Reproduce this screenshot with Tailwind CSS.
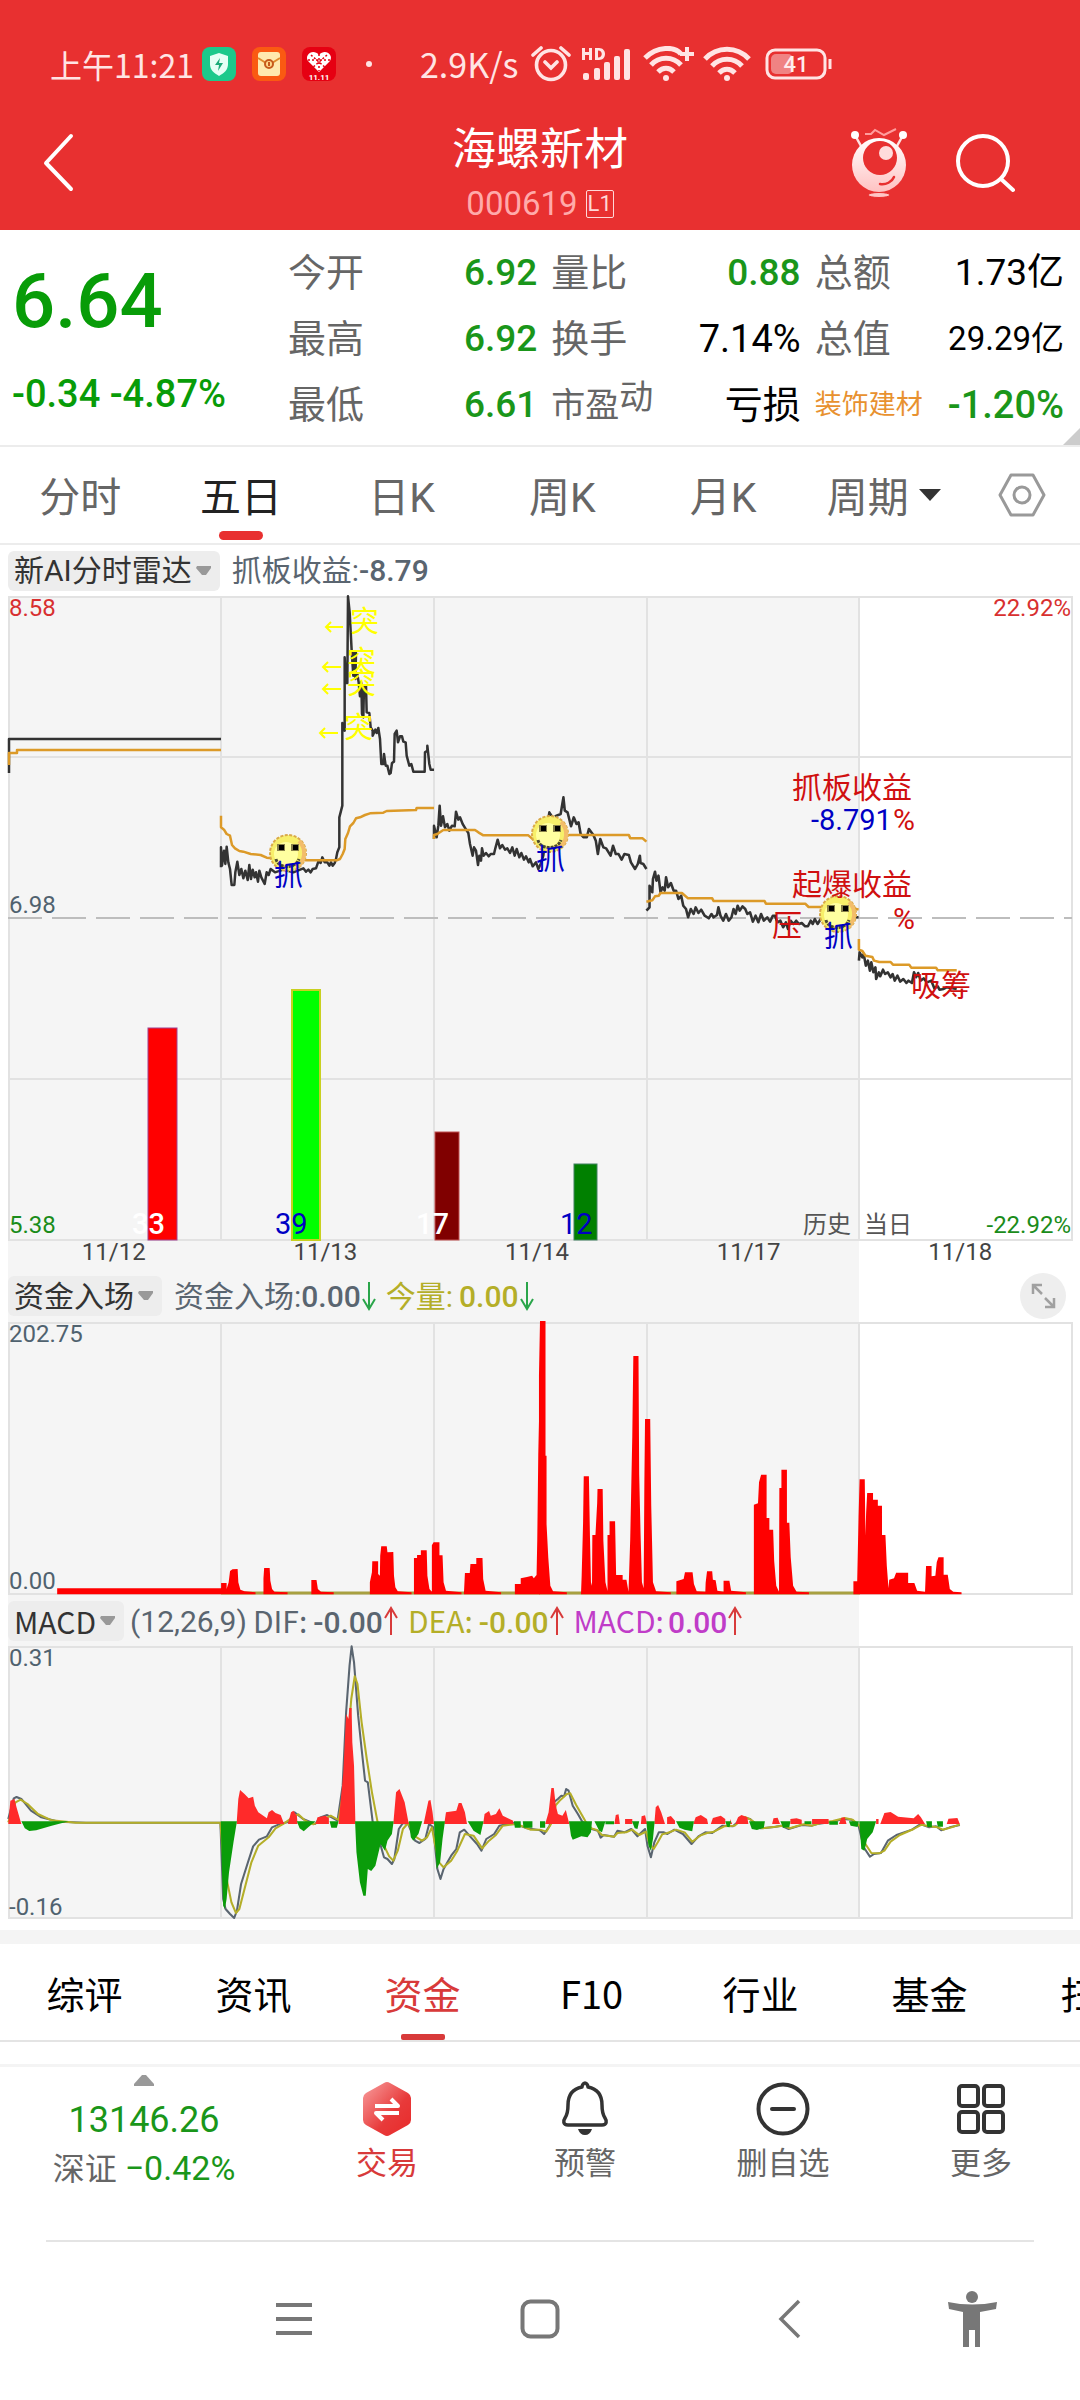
<!DOCTYPE html>
<html lang="zh-CN">
<head>
<meta charset="utf-8">
<meta name="viewport" content="width=device-width, initial-scale=1">
<title>海螺新材 000619</title>
<script src="https://cdn.jsdelivr.net/npm/@tailwindcss/browser@4"></script>
</head>
<body class="bg-white font-['Roboto','Noto_Sans_CJK_SC',sans-serif] text-[#333] overflow-x-hidden">

<header class="bg-[#e83030] text-white">
  <!-- status bar -->
  <div class="flex items-center h-32 pl-[50px] text-[#ffe4e4]">
    <span class="w-[152px] text-[32px] leading-9 font-['Noto_Sans_CJK_SC',sans-serif] whitespace-nowrap">上午11:21</span>
    <div class="flex gap-4">
      <svg class="size-[34px]" viewBox="0 0 34 34"><rect width="34" height="34" rx="8" fill="#1cc98b"/><path d="M17 6l9 3v8c0 6-4 9-9 12-5-3-9-6-9-12V9z" fill="#e6fff5"/><path d="M18 11l-5 7h4l-1 6 5-8h-4z" fill="#1cab78"/></svg>
      <svg class="size-[34px]" viewBox="0 0 34 34"><rect width="34" height="34" rx="8" fill="#fa5a12"/><rect x="6" y="5" width="22" height="24" rx="3" fill="#ffe9ae"/><path d="M6 11l8 5m14-5l-8 5" stroke="#e08a2c" stroke-width="2"/><circle cx="17" cy="17" r="4" fill="#ffd98a" stroke="#c65a1c" stroke-width="2"/><path d="M17 15v4" stroke="#c65a1c" stroke-width="2"/></svg>
      <svg class="size-[34px]" viewBox="0 0 34 34"><rect width="34" height="34" rx="8" fill="#e60012"/><path d="M17 25L6 14c-4-6 5-13 11-6 6-7 15 0 11 6z" fill="#fff"/><path d="M9 8l16 14M25 8L9 22M17 7v17M6 13h22" stroke="#e60012" stroke-width="1.500" stroke-dasharray="2 2"/><text x="17" y="33" font-size="8" font-weight="700" fill="#fff" text-anchor="middle">11.11</text></svg>
    </div>
    <span class="size-[6px] rounded-full bg-[#ffe4e4] ml-[30px]"></span>
    <span class="ml-12 w-[111px] text-[34px] leading-9 font-['Noto_Sans_CJK_SC',sans-serif]">2.9K/s</span>
    <svg class="w-10 h-10" viewBox="0 0 40 40" fill="none" stroke="#ffe4e4" stroke-width="3.600" stroke-linecap="round"><circle cx="20" cy="21" r="14.500"/><path d="M14 18l6 6 6-6M2 11l8-7M38 11l-8-7"/></svg>
    <svg class="ml-[10px] w-[50px] h-9" viewBox="0 0 50 36" fill="#ffe4e4"><path d="M1 2h3v4h4V2h3v12H8V9H4v5H1zM14 2h4c8 0 8 12 0 12h-4zm3 2.500v7c5 0 5-7 0-7z"/><rect x="2" y="27" width="6" height="7" rx="2"/><rect x="13" y="22" width="6" height="12" rx="2"/><rect x="23" y="16" width="6" height="18" rx="2"/><rect x="33" y="10" width="6" height="24" rx="2"/><rect x="43" y="3" width="6" height="31" rx="2"/></svg>
    <svg class="ml-3 w-[52px] h-9" viewBox="0 0 52 36" fill="none" stroke="#ffe4e4" stroke-width="5"><path d="M2 12c12-12 30-12 36-4M8 19c8-9 22-9 30 0M15 26c5-5 11-5 16 0" stroke-linecap="butt"/><circle cx="23" cy="32" r="3" fill="#ffe4e4" stroke="none"/><path d="M44 1v14M37 8h14" stroke-width="4"/></svg>
    <svg class="ml-2 w-[48px] h-9" viewBox="0 0 48 36" fill="none" stroke="#ffe4e4" stroke-width="5"><path d="M2 13c12-13 32-13 44 0M9 20c8-9 22-9 30 0M16 27c5-5 11-5 16 0"/><circle cx="24" cy="32" r="3" fill="#ffe4e4" stroke="none"/></svg>
    <svg class="ml-[14px] w-[68px] h-8" viewBox="0 0 68 32"><rect x="2" y="2" width="58" height="28" rx="8" fill="none" stroke="#ffe4e4" stroke-width="3"/><rect x="6" y="6" width="22" height="20" rx="5" fill="#f08383"/><path d="M65 11v10" stroke="#ffe4e4" stroke-width="3"/><text x="31" y="24" font-size="22" font-weight="500" fill="#ffecec" text-anchor="middle">41</text></svg>
  </div>
  <!-- title row -->
  <div class="flex items-start justify-between h-[102px]">
    <a href="#back" aria-label="返回" class="w-[240px] pl-10"><svg class="mt-1 w-9 h-[60px]" viewBox="0 0 36 60" fill="none" stroke="#fff" stroke-width="4" stroke-linecap="round" stroke-linejoin="round"><path d="M31 4L6 31l25 26"/></svg></a>
    <div class="flex flex-col items-center -mt-[10px]">
      <h1 class="text-[44px] leading-[56px] font-['Noto_Sans_CJK_SC',sans-serif]">海螺新材</h1>
      <div class="flex items-center gap-2 h-12 text-[33px] text-[#ffaaaa] pt-[11px]">000619<span class="border border-[#ffd8d8] rounded-xs h-7 w-7 text-center text-[22px] leading-[26px] text-[#ffd8d8]">L1</span></div>
    </div>
    <div class="w-[240px] flex items-center gap-[46px] pl-[9px]">
      <button aria-label="智能助手"><svg class="w-[60px] h-[70px]" viewBox="0 0 60 70"><defs><linearGradient id="rb" x1="0" y1="0" x2="0" y2="1"><stop offset="0" stop-color="#fff"/><stop offset="1" stop-color="#ffc2c2"/></linearGradient></defs><path d="M7 9l5 9M53 9l-5 9" stroke="#ffe2e2" stroke-width="2.500"/><circle cx="6" cy="7" r="4" fill="#fff"/><circle cx="54" cy="7" r="4" fill="#fff"/><path d="M16 6h6l4-4 9 5 12-6" fill="none" stroke="#ff9d9d" stroke-width="2"/><circle cx="30" cy="37" r="27" fill="url(#rb)"/><circle cx="31" cy="30" r="17" fill="#e83030"/><circle cx="37" cy="25" r="7" fill="#ffdcdc"/><path d="M31 56c6 1 12-2 14-7" fill="none" stroke="#e83030" stroke-width="2.500" stroke-linecap="round"/><ellipse cx="30" cy="67" rx="11" ry="2.500" fill="#ffc6c6" stroke="#e83030"/></svg></button>
      <button aria-label="搜索"><svg class="size-[60px]" viewBox="0 0 60 60" fill="none" stroke="#fff" stroke-width="4" stroke-linecap="round"><circle cx="28" cy="28" r="25"/><path d="M46 46l12 11"/></svg></button>
    </div>
  </div>
</header>

<!-- quote summary -->
<section class="relative flex pt-[10px] pb-[7px] border-b-2 border-[#ececec] overflow-hidden">
  <div class="w-[288px] shrink-0 pl-3 text-[#089c08] font-medium">
    <div class="text-[76px] leading-[122px]">6.64</div>
    <div class="text-[38px] leading-[64px] whitespace-nowrap">-0.34 -4.87%</div>
  </div>
  <dl class="flex-1 grid grid-cols-3 gap-x-[14px] pr-4 text-[38px] leading-[66px] text-black [&_dt]:text-[#666] [&_div]:flex [&_div]:justify-between [&_div]:whitespace-nowrap">
    <div><dt>今开</dt><dd class="text-[#1a961a] font-medium text-[37px]">6.92</dd></div>
    <div><dt>量比</dt><dd class="text-[#1a961a] font-medium text-[37px]">0.88</dd></div>
    <div><dt>总额</dt><dd class="text-[37px]">1.73亿</dd></div>
    <div><dt>最高</dt><dd class="text-[#1a961a] font-medium text-[37px]">6.92</dd></div>
    <div><dt>换手</dt><dd class="text-[38px]">7.14%</dd></div>
    <div><dt>总值</dt><dd class="text-[33px]">29.29亿</dd></div>
    <div><dt>最低</dt><dd class="text-[#1a961a] font-medium text-[37px]">6.61</dd></div>
    <div><dt class="text-[34px]">市盈<span class="inline-block align-top -mt-2">动</span></dt><dd>亏损</dd></div>
    <div><dt class="text-[27px]"><a href="#sector" class="text-[#e8912f]">装饰建材</a></dt><dd class="text-[#1a961a] font-medium text-[38px]">-1.20%</dd></div>
  </dl>
  <svg class="absolute right-0 bottom-0 size-[17px]" viewBox="0 0 17 17"><path d="M17 0v17H0z" fill="#ccc"/></svg>
</section>

<!-- period tabs -->
<nav class="flex items-center h-[98px] border-b-2 border-[#ececec] text-[41px] text-[#666] [&>button]:pt-2">
  <button class="flex-1 h-full">分时</button>
  <button class="flex-1 h-full relative text-[#222]">五日<span class="absolute left-1/2 -ml-[22px] bottom-[3px] w-11 h-[9px] rounded-full bg-[#e83030]"></span></button>
  <button class="flex-1 h-full">日K</button>
  <button class="flex-1 h-full">周K</button>
  <button class="flex-1 h-full">月K</button>
  <button class="flex-1 h-full flex items-center justify-center gap-[10px]">周期<svg class="w-[22px] h-3 mb-2" viewBox="0 0 22 12"><path d="M0 0h22L11 12z" fill="#333"/></svg></button>
  <button aria-label="设置" class="w-[116px] flex justify-center"><svg class="w-12 h-11 mb-2" viewBox="0 0 48 44" fill="none" stroke="#999" stroke-width="3" stroke-linejoin="round"><path d="M13 2h22l11 20-11 20H13L2 22z"/><circle cx="24" cy="22" r="8"/></svg></button>
</nav>

<main>
  <div class="flex items-center h-[51px] mx-2 text-[30px] text-[#5a6570] whitespace-nowrap">
    <button aria-haspopup="listbox" class="flex items-center gap-1 h-10 rounded-md bg-[#ededed] pl-[6px] pr-2 text-[#333]">新AI分时雷达<svg class="w-4 h-[10px]" viewBox="0 0 16 10"><path d="M1 0h14v2L10 9H6L0 2z" fill="#999"/></svg></button>
    <span class="ml-3">抓板收益:<span class="font-medium">-8.79</span></span>
  </div>

  <div class="mx-2 bg-[linear-gradient(to_right,#f5f5f5_80%,#fff_80%)]">
    <svg class="block w-full h-auto overflow-visible" viewBox="8 597 1064 644" font-size="24" role="img" aria-label="五日分时走势">
      <defs>
        <g id="face">
          <circle r="18" fill="#f7ef6a" stroke="#d9a94a" stroke-width="2" stroke-dasharray="3 1.500"/>
          <circle cx="-2" cy="1" r="12" fill="#ffffa0"/>
          <path d="M11-12a17 17 0 0 1-2 26" fill="none" stroke="#f3bd6a" stroke-width="4"/>
          <path d="M-11-9h8v7h-8zM3-9h8v7H3z" fill="#88804a"/><path d="M-9-8h5v5h-5zM5-8h5v5H5z" fill="#000"/>
          <path d="M-12 6c2 10 20 10 23 0" fill="none" stroke="#4c4a30" stroke-width="3" stroke-dasharray="3 1"/>
        </g>
      </defs>
      <g fill="none" stroke="#e2e2e2" stroke-width="2">
        <rect x="9" y="598" width="1063" height="643"/>
        <path d="M8 758H1072M8 1080H1072M221 597V1241M434 597V1241M647 597V1241M859 597V1241"/>
        <path d="M8 919H1072" stroke="#bdbdbd" stroke-dasharray="34 10"/>
      </g>
      <rect x="148" y="1029" width="29" height="212" fill="#f00" stroke="#a04090"/>
      <rect x="292" y="991" width="28" height="250" fill="#0f0" stroke="#c8d020" stroke-width="2"/>
      <rect x="435" y="1133" width="24" height="108" fill="#800000" stroke="#c05050"/>
      <rect x="574" y="1165" width="23" height="76" fill="#008000" stroke="#408060"/>
      <g fill="none" stroke-width="2.500" stroke-linejoin="round">
        <g transform="translate(200 580) scale(.33333)" stroke="#333" stroke-width="7.500">
          <path d="M63 865L63 805L66 860L72 815L76 855L80 803L85 850L90 870L95 918L103 918L106 880L112 848L118 888L124 870L130 898L136 875L143 903L148 858L153 900L158 872L164 895L168 880L174 908L178 875L184 895L194 915L200 880L206 888L212 870L225 880L250 872L280 880L310 868L318 878L325 872L332 880L338 870L348 868L355 848L362 852L367 835L374 850L382 850L388 860L393 850L398 860L404 852L408 840L412 820L418 805L418 715L427 680L427 432L434 455L434 235L438 312L442 312L444 52L449 100L455 215L460 290L463 220L468 222L466 300L472 285L476 310L480 352L484 310L486 405L490 415L492 320L498 320L500 400L508 402L512 445L518 455L518 470L526 452L530 462L535 447L540 480L544 555L550 555L552 525L557 560L562 560L568 585L572 582L576 552L582 548L584 465L590 455L594 490L600 472L606 472L610 488L617 490L620 530L628 560L634 555L640 578L674 578L675 520L682 515L682 500L688 555L692 572L702 572"/>
          <path d="M702 780L702 740L710 775L715 740L719 680L723 740L729 712L735 745L742 735L748 755L756 740L764 742L768 698L775 722L780 715L788 735L796 748L805 762L810 795L818 830L822 805L828 815L834 858L838 830L843 845L846 808L851 830L858 822L866 832L872 825L882 825L886 808L893 782L900 808L907 798L915 812L922 808L930 822L937 805L944 830L950 810L958 835L964 822L972 842L978 832L986 850L990 840L998 862L1008 850L1015 870L1022 855L1030 830L1038 760L1048 700L1056 712L1064 720"/>
          <path stroke="#dc9a28" d="M63 710V745L72 752L80 765L90 770L96 798L105 808L118 816L130 818L152 825L182 828L200 836L240 840L320 844L410 844L420 840L428 825L434 810L436 780L444 762L450 742L460 732L468 718L480 715L495 708L510 703L550 701L560 696L648 693L650 687L702 687M702 780L702 768L712 765L730 753L825 753L835 760L850 769L985 769L1000 782"/>
        </g>
        <path stroke="#333" d="M9 774V740H221"/>
        <path stroke="#dc9a28" d="M9 766V754H17V751H221"/>
        <g transform="translate(540 540) scale(.34439 .33333)" stroke="#333" stroke-width="7.500">
          <path d="M43 832L60 825L68 775L72 815L80 820L90 862L98 835L106 855L112 850L118 885L126 895L136 895L142 870L155 888L162 905L168 945L175 900L184 925L192 928L205 950L212 920L220 945L228 945L237 962L245 945L258 948L264 970L276 990L284 975L290 950L292 972L300 975L309 990"/>
          <path d="M309 1115L318 1105L318 1040L326 1060L328 1020L334 998L338 1025L344 1010L350 1060L356 1045L362 1055L366 1015L372 1045L380 1032L388 1055L395 1055L402 1080L410 1070L416 1100L424 1110L430 1135L438 1110L446 1125L452 1105L460 1122L468 1112L478 1130L490 1138L498 1125L504 1135L514 1128L518 1105L524 1130L532 1145L540 1125L548 1145L556 1135L562 1110L568 1125L574 1100L580 1115L588 1102L596 1110L602 1125L610 1120L618 1148L626 1130L634 1150L642 1125L650 1145L660 1135L668 1148L676 1130L682 1130L690 1150L698 1145L706 1165L714 1150L720 1170L728 1145L736 1155L744 1145L752 1155L760 1152L770 1162L778 1162L786 1145L792 1155L798 1140L806 1155L815 1140L850 1145L890 1135L925 1135"/>
          <path d="M926 1265L928 1240L936 1255L940 1245L946 1280L952 1265L958 1295L962 1270L968 1300L974 1285L976 1320L984 1300L988 1312L996 1292L1002 1305L1010 1300L1018 1315L1024 1305L1030 1325L1038 1310L1046 1328L1055 1320L1064 1332L1070 1325L1080 1332L1086 1300L1092 1315L1098 1302L1106 1325L1114 1318L1124 1330L1136 1325L1145 1348L1155 1342L1160 1352L1172 1350L1180 1345L1210 1350"/>
          <path stroke="#dc9a28" d="M60 888H258L262 898L298 898L309 908M309 1088L326 1084L334 1072L345 1070L350 1062H412L430 1078H500L504 1086H652L656 1094H770L780 1104H900L925 1112M926 1200V1232L936 1236L945 1250L965 1254L970 1265L985 1269H1018L1025 1277H1072L1078 1286H1150L1155 1294H1210"/>
        </g>
      </g>
      <use href="#face" x="288" y="854"/><use href="#face" x="550" y="835"/><use href="#face" x="838" y="915"/>
      <g font-size="29" fill="#ff0">
        <text x="350" y="633">突</text><text x="347" y="673">突</text><text x="347" y="695">突</text><text x="344" y="739">突</text>
        <path fill="none" stroke="#ff0" stroke-width="2" d="M343 628H326M331 623L326 628L331 633M341 668H323M328 663L323 668L328 673M341 690H323M328 685L323 690L328 695M338 734H320M325 729L320 734L325 739"/>
      </g>
      <g font-size="29" fill="#0000c4">
        <text x="274" y="887">抓</text><text x="536" y="871">抓</text><text x="824" y="948">抓</text>
        <text x="811" y="831">-8.791</text>
        <text x="275" y="1235">39</text><text x="560" y="1235">12</text>
      </g>
      <g font-size="29" fill="#fff" font-weight="500"><text x="132" y="1235">33</text><text x="416" y="1235">17</text></g>
      <g font-size="30" fill="#d01010">
        <text x="792" y="799">抓板收益</text><text x="893" y="831">%</text><text x="792" y="896">起爆收益</text><text x="893" y="930">%</text>
        <text x="772" y="937">压</text><text x="911" y="997">吸筹</text>
      </g>
      <text x="9" y="617" fill="#d83030">8.58</text><text x="1071" y="617" text-anchor="end" fill="#d83030">22.92%</text>
      <text x="9" y="914" fill="#50626f">6.98</text>
      <text x="9" y="1234" fill="#1a8c1a">5.38</text><text x="1071" y="1234" text-anchor="end" fill="#1a8c1a">-22.92%</text>
      <text x="803" y="1234" fill="#555">历史</text><text x="864" y="1234" fill="#555">当日</text>
    </svg>

    <div class="grid grid-cols-5 mr-[6px] text-center text-[24px] leading-6 text-[#444]"><span>11/12</span><span>11/13</span><span>11/14</span><span>11/17</span><span>11/18</span></div>

    <div class="flex items-center h-10 mt-3 mb-[6px] text-[30px] text-[#5a6570] whitespace-nowrap">
      <button aria-haspopup="listbox" class="flex items-center gap-1 h-10 rounded-md bg-[#ededed] pl-[6px] pr-2 text-[#333]">资金入场<svg class="w-4 h-[10px]" viewBox="0 0 16 10"><path d="M1 0h14v2L10 9H6L0 2z" fill="#999"/></svg></button>
      <span class="ml-3">资金入场:<span class="font-medium">0.00</span></span>
      <svg class="w-[14px] h-[30px] ml-px" viewBox="0 0 14 30" fill="none" stroke="#2aa54a" stroke-width="2"><path d="M7 1v27M1 18l6 10 6-10"/></svg>
      <span class="ml-[10px] text-[#b4ae28]">今量:<span class="font-medium ml-[6px]">0.00</span></span>
      <svg class="w-[14px] h-[30px] ml-px" viewBox="0 0 14 30" fill="none" stroke="#2aa54a" stroke-width="2"><path d="M7 1v27M1 18l6 10 6-10"/></svg>
      <button aria-label="展开" class="ml-auto mr-[6px]"><svg class="size-[46px]" viewBox="0 0 46 46" fill="none" stroke="#a0a0a0" stroke-width="2.500"><circle cx="23" cy="23" r="23" fill="#eee" stroke="none"/><path d="M22 12H13V21M13 12l9 9M25 34h9V25M34 34l-9-9"/></svg></button>
    </div>

    <svg class="block w-full h-auto overflow-visible" viewBox="8 1323 1064 273" font-size="24" fill="#50626f" role="img" aria-label="资金入场">
      <g fill="none" stroke="#e2e2e2" stroke-width="2"><rect x="9" y="1324" width="1063" height="271"/><path d="M221 1323V1596M434 1323V1596M647 1323V1596M859 1323V1596"/></g>
      <path d="M221 1594H860" stroke="#a8a040" stroke-width="3"/>
      <g fill="#f00">
        <path transform="translate(0 1310) scale(.34439 .33333)" d="M166 856V838H642V822H658V840L664 820L668 786L675 781L690 780L692 820L698 842L710 847L742 850V856ZM765 856V808L767 777H783L785 815L790 840L797 848L835 850V856ZM904 856V813H919L923 840L932 848L969 850V856ZM1074 856V820L1080 790L1081 757H1098V795L1103 800L1104 740L1107 712H1123L1125 730L1142 729L1144 800L1148 835L1155 847L1195 850V856ZM1202 856V747H1211V738H1222V724H1239L1241 800L1247 840L1254 848V709L1259 700H1276V739H1285L1288 820L1295 845L1340 850V856ZM1347 856L1350 792H1364L1366 765H1383V747H1401L1403 810L1410 845L1455 850V856ZM1495 856V825H1512V808L1530 804L1545 800L1550 808L1558 798L1560 695L1563 435L1568 200V856Z"/>
        <path transform="translate(540 1310) scale(.34439 .33333)" d="M-3 856L-3 200L0 36H16V440H19V645L24 745L30 830L38 847L78 850V856ZM119 856L121 800L125 645L127 502H142L145 680L148 820L151 830L152 678H161L166 582L167 540H182L184 695L190 820L196 846V678H202V637H218L221 798H240V812H251L257 848L262 690L268 380L271 141H286L288 495L292 675L296 820L301 838L303 525L305 330H320L323 590L328 820L337 847L380 850V856ZM396 856V817L417 810L421 790H443L447 825L455 847L480 848L481 821L485 787H500L502 812L510 814L515 845L533 848V815H550L555 845L598 850V856ZM621 856V587L633 583L636 520L642 497H658V627H666V662H677L680 756L686 830L694 848L695 537H701V482H717V641H724L728 745L735 830L745 848L781 850V856ZM910 856V817H921L925 625L928 511H943L945 680L947 610L950 552H967V572H981V590H993V678H1003L1007 770L1012 838L1014 812L1028 808L1034 791H1069V822H1087L1095 845L1118 848L1121 771H1137V802L1148 800L1152 760L1157 745H1172V797H1184L1190 840L1200 848L1224 850V856Z"/>
      </g>
      <text x="9" y="1343">202.75</text><text x="9" y="1590">0.00</text>
    </svg>

    <div class="flex items-center h-10 mt-[6px] mb-1 text-[30px] text-[#5a6570] whitespace-nowrap font-['Noto_Sans_CJK_SC',sans-serif]">
      <button aria-haspopup="listbox" class="flex items-center gap-1 h-10 rounded-md bg-[#ededed] pl-[6px] pr-2 text-[#333]">MACD<svg class="w-4 h-[10px]" viewBox="0 0 16 10"><path d="M1 0h14v2L10 9H6L0 2z" fill="#999"/></svg></button>
      <span class="ml-[6px] font-['Roboto'] text-[30px]">(12,26,9)</span>
      <span class="ml-[6px]">DIF:<span class="font-['Roboto'] font-medium ml-[6px]">-0.00</span></span>
      <svg class="w-[14px] h-[30px] ml-px" viewBox="0 0 14 30" fill="none" stroke="#d83a3a" stroke-width="2"><path d="M7 29V2M1 12l6-10 6 10"/></svg>
      <span class="ml-[10px] text-[#b4ae28]">DEA:<span class="font-['Roboto'] font-medium ml-[6px]">-0.00</span></span>
      <svg class="w-[14px] h-[30px] ml-px" viewBox="0 0 14 30" fill="none" stroke="#d83a3a" stroke-width="2"><path d="M7 29V2M1 12l6-10 6 10"/></svg>
      <span class="ml-[10px] text-[#c03cc8]">MACD:<span class="font-['Roboto'] font-medium ml-1">0.00</span></span>
      <svg class="w-[14px] h-[30px] ml-px" viewBox="0 0 14 30" fill="none" stroke="#d83a3a" stroke-width="2"><path d="M7 29V2M1 12l6-10 6 10"/></svg>
    </div>

    <svg class="block w-full h-auto overflow-visible" viewBox="8 1646 1064 274" font-size="24" fill="#50626f" role="img" aria-label="MACD">
      <g fill="none" stroke="#e2e2e2" stroke-width="2"><rect x="9" y="1648" width="1063" height="271"/><path d="M221 1647V1920M434 1647V1920M647 1647V1920M859 1647V1920"/></g>
      <g transform="translate(0 1600) scale(.34439 .33333)">
        <g fill="none" stroke-width="6" stroke-linejoin="round">
          <path stroke="#5a6570" d="M24 660L40 598L48 594L62 600L90 635L120 655L170 668L250 671H640L648 900L655 930L668 945L680 957L688 935L700 855L720 790L735 742L752 722L775 712L790 685L815 674L840 668L855 640L880 660L915 675L930 655L950 648L980 665L995 560L1005 340L1015 200L1021 142L1028 190L1040 350L1050 450L1060 545L1068 550L1082 667L1100 720L1115 775L1125 780L1138 795L1145 780L1158 690L1170 672L1185 675L1205 725L1218 732L1235 720L1246 675L1258 685L1270 810L1279 840L1288 810L1310 770L1325 750L1335 700L1348 692L1365 712L1385 735L1398 755L1412 720L1435 705L1450 680L1490 672L1530 688L1568 694"/>
          <path stroke="#b4ae28" d="M24 670L45 610L60 602L80 615L110 645L150 664L220 671H640L650 800L662 860L672 910L685 942L695 930L710 870L730 790L750 740L780 715L800 688L825 673L850 655L866 646L885 664L910 676L940 662L960 650L983 663L1000 560L1012 400L1020 300L1030 232L1038 255L1050 370L1065 480L1080 580L1096 667L1115 740L1130 772L1142 785L1155 755L1170 690L1185 672L1205 712L1225 725L1240 715L1254 685L1262 730L1275 790L1288 805L1310 785L1328 755L1350 705L1375 710L1400 748L1420 725L1440 708L1460 680L1500 675L1540 692L1568 692"/>
        </g>
        <path fill="#ff2a2a" d="M24 675L30 605L42 600L48 625L62 675ZM687 675L692 600L697 573L710 585L722 598L735 593L740 620L750 640L775 658L780 640L790 633L800 642L815 648L825 675ZM836 675L845 640L852 635L862 650L864 675ZM916 675L922 655L945 650L955 658L955 675ZM983 675L997 520L1005 345L1012 360L1014 327H1021L1023 430L1028 500L1032 675ZM1142 675L1150 580L1160 570L1175 610L1187 675ZM1230 675L1244 605L1250 603L1256 640L1260 675ZM1290 675L1295 640L1325 635L1332 612L1340 612L1350 640L1356 675ZM1403 675L1407 645L1420 636L1425 650L1440 645L1450 628L1460 650L1490 665V675Z"/>
        <path fill="#0a9c0a" d="M62 667H200L150 680L105 694L85 696L72 688ZM641 667H688L678 730L665 820L658 900L653 930L648 920L644 800ZM862 667H916L895 685L882 697L870 688ZM957 667H983L978 686L962 686ZM1031 667H1143L1138 705L1125 725L1118 755L1105 735L1090 800L1078 816L1068 810L1062 890L1055 890L1045 850L1035 760ZM1187 667H1226L1215 705L1200 725L1193 715ZM1260 667H1292L1285 720L1278 790L1268 810L1263 730ZM1358 667H1404L1395 708L1375 695ZM1492 667H1512V686H1495ZM1518 667H1546V686H1520Z"/>
      </g>
      <g transform="translate(540 1600) scale(.34439 .33333)">
        <g fill="none" stroke-width="6" stroke-linejoin="round">
          <path stroke="#5a6570" d="M0 694L12 705L28 680L40 610L52 600L62 590L70 592L76 570L83 575L95 620L110 645L122 667L150 690L168 695L176 716L185 708L215 713L225 695L245 700L265 690L283 712L305 690L312 740L322 775L332 730L345 700L360 700L370 705L390 692L415 705L440 735L460 712L480 700L500 702L530 680L560 682L590 655L610 660L640 688L680 684L700 680L722 690L760 678L790 680L810 674L850 668L880 660L905 662L925 680L940 745L958 773L970 765L990 762L1010 725L1035 708L1080 692L1105 675L1130 685L1150 682L1165 694L1190 685L1219 678"/>
          <path stroke="#b4ae28" d="M0 692L18 698L32 675L46 618L60 602L78 585L88 583L105 618L132 667L150 688L165 693L180 708L215 713L225 702L250 700L268 692L288 708L308 698L318 735L330 750L342 730L355 706L370 702L395 692L420 700L442 728L465 710L485 702L505 698L535 682L565 680L595 654L612 662L645 688L685 683L705 680L725 688L765 676L790 680L815 672L850 666L885 657L908 662L928 680L945 735L962 762L985 763L1000 755L1018 728L1045 708L1085 690L1108 677L1130 682L1155 685L1170 692L1195 685L1219 676"/>
        </g>
        <path fill="#ff2a2a" d="M15 675L25 640L33 567H40L46 620L52 645L65 650L75 633L85 675ZM216 675L220 648L228 646L232 675ZM247 675V660H268V675ZM293 675L295 652L305 649L311 675ZM332 675L336 625L343 618L352 640L363 675ZM369 675V655L380 651L392 665V675ZM445 675L452 655L467 648L485 660L488 675ZM496 675L502 657L525 650L538 660V675ZM552 675V660L558 675ZM567 675L575 655L585 648L602 655L605 675ZM674 675L678 658L690 656L697 675ZM727 675V660L745 658L760 662V675ZM790 675V660H838V675ZM868 675L875 656L885 655L890 675ZM976 675V660H983V675ZM988 675L1000 642L1018 639L1040 653L1085 658L1098 645L1106 655L1118 675ZM1181 675L1186 659L1212 657L1219 675Z"/>
        <path fill="#0a9c0a" d="M0 667H15V686H0ZM84 667H151L148 700L138 715L120 712L95 722L90 710ZM158 667H190L180 700L172 695ZM190 667H215V676H190ZM267 667H288L283 690L275 688ZM309 667H333L328 720L322 755L315 740ZM395 667H447L442 697L420 692L405 686ZM538 667H555L550 685L543 683ZM607 667H653L650 686L630 693L615 690ZM698 667H727L724 685L706 686ZM768 667h20v8h-20ZM840 667H865V677H840ZM897 667H926L922 684L902 680ZM927 667H976L966 700L950 720L942 755L933 750ZM1121 667H1138V684H1125ZM1152 667H1170V683H1155Z"/>
      </g>
      <text x="9" y="1667">0.31</text><text x="9" y="1916">-0.16</text>
    </svg>
  </div>
</main>

<!-- content tabs -->
<nav class="mt-[11px] border-t-[14px] border-[#f4f4f4]">
  <div class="flex h-[98px] border-b-2 border-[#e4e4e4] overflow-hidden text-[38px] text-black font-['Noto_Sans_CJK_SC',sans-serif] [&>a]:w-[15.65%] [&>a]:shrink-0 [&>a]:text-center [&>a]:leading-[98px]">
    <a href="#review">综评</a><a href="#news">资讯</a>
    <a href="#funds" class="relative text-[#d83a3a]">资金<span class="absolute left-1/2 -ml-[22px] bottom-0 w-11 h-[6px] rounded-xs bg-[#d83a3a]"></span></a>
    <a href="#f10">F10</a><a href="#industry">行业</a><a href="#fund">基金</a><a href="#scan">扫雷</a>
  </div>
</nav>

<!-- bottom actions -->
<div class="mt-[22px] border-t-[3px] border-[#f4f4f4] flex items-start h-[176px] text-[31px] text-[#666] whitespace-nowrap">
  <a href="#index" class="w-[288px] flex flex-col items-center pt-2">
    <svg class="w-5 h-[11px]" viewBox="0 0 20 11"><path d="M8 0h4l8 9v2H0V9z" fill="#999"/></svg>
    <span class="mt-3 text-[36px] leading-[44px] text-[#1a961a]">13146.26</span>
    <span class="mt-[6px] text-[32px] leading-10">深证 <span class="text-[34px] text-[#1a961a]">−0.42%</span></span>
  </a>
  <button class="flex-1 flex flex-col items-center gap-[9px] pt-[14px] text-[#d83a3a]"><svg class="w-[50px] h-[56px]" viewBox="0 0 50 56"><defs><linearGradient id="tr" x1="0" y1="0" x2="1" y2="1"><stop offset="0" stop-color="#f8a0a0"/><stop offset=".6" stop-color="#e83a3a"/><stop offset="1" stop-color="#e82a2a"/></linearGradient></defs><path d="M22 2q3-2 6 0l18 10q3 2 3 5v22q0 3-3 5L28 54q-3 2-6 0L4 44q-3-2-3-5V17q0-3 3-5z" fill="url(#tr)"/><path d="M13 25h23l-7-7M37 32H14l7 7" fill="none" stroke="#fff" stroke-width="4" stroke-linejoin="round"/></svg><span class="leading-9">交易</span></button>
  <button class="flex-1 flex flex-col items-center gap-[9px] pt-[14px]"><svg class="w-[50px] h-[56px]" viewBox="0 0 50 56" fill="none" stroke="#333" stroke-width="3.500" stroke-linejoin="round"><path d="M25 2c-2 0-3 3-3 4C12 8 8 14 8 24c0 8-1 10-3 13s-2 7 3 7h34c5 0 5-4 3-7s-3-5-3-13c0-10-4-16-14-18 0-1-1-4-3-4z"/><path d="M18 48h14q-2 6-7 6t-7-6z" fill="#333" stroke="none"/></svg><span class="leading-9">预警</span></button>
  <button class="flex-1 flex flex-col items-center gap-[9px] pt-[14px]"><svg class="w-[54px] h-[56px]" viewBox="0 0 54 56" fill="none" stroke="#333" stroke-width="4" stroke-linecap="round"><circle cx="27" cy="28" r="24.500"/><path d="M16 28h22"/></svg><span class="leading-9">删自选</span></button>
  <button class="flex-1 flex flex-col items-center gap-[9px] pt-[14px]"><svg class="w-[50px] h-[56px]" viewBox="0 0 50 56" fill="none" stroke="#333" stroke-width="4"><rect x="3" y="5" width="19" height="20" rx="3"/><rect x="28" y="5" width="19" height="20" rx="3"/><rect x="3" y="31" width="19" height="20" rx="3"/><rect x="28" y="31" width="19" height="20" rx="3"/></svg><span class="leading-9">更多</span></button>
</div>

<!-- system navigation -->
<footer class="mx-[46px] border-t-2 border-[#e4e4e4] h-[160px] pb-1 grid grid-cols-4 items-center">
  <button aria-label="最近任务" class="justify-self-end mr-[-31px] p-3"><svg class="w-9 h-10" viewBox="0 0 36 40" stroke="#777" stroke-width="4"><path d="M0 6h36M0 20h36M0 34h36"/></svg></button>
  <button aria-label="主屏幕" class="justify-self-end mr-[-32px] p-3"><svg class="w-10 h-10" viewBox="0 0 40 40"><rect x="2.500" y="2.500" width="35" height="35" rx="8" fill="none" stroke="#777" stroke-width="4"/></svg></button>
  <button aria-label="返回上一页" class="justify-self-end mr-[-26px] p-3"><svg class="w-6 h-10" viewBox="0 0 24 40"><path d="M22 2L4 20l18 18" fill="none" stroke="#777" stroke-width="3.500"/></svg></button>
  <button aria-label="无障碍" class="justify-self-end mr-[25px] p-3"><svg class="w-[50px] h-14" viewBox="0 0 50 56" fill="#777"><circle cx="25" cy="6" r="6"/><path d="M1 11l1 7 14 3v35h6V39h6v17h5V21l16-3 1-7q-25 5-49 0z"/></svg></button>
</footer>
</body>
</html>
